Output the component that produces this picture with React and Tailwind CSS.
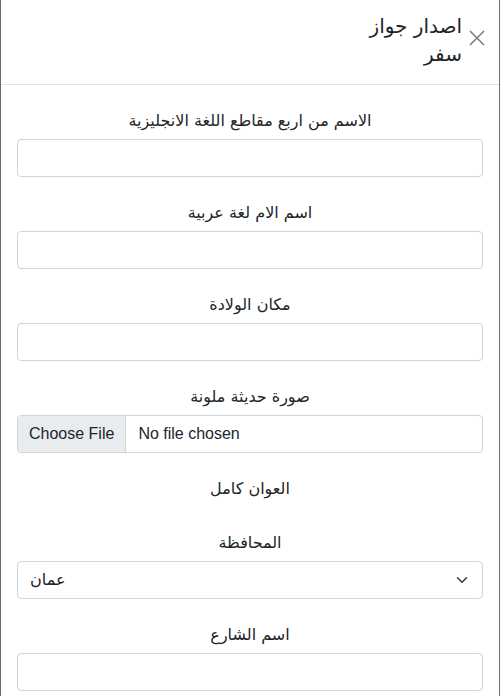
import React from 'react';

const Label = ({ children, className = 'mb-[6px]' }) => (
    <label className={`block text-center text-[16px] leading-6 text-[#212529] ${className}`}>{children}</label>
);

const TextField = ({ label }) => (
    <div className="mb-[24px]">
        <Label>{label}</Label>
        <div className="h-[38px] w-full rounded border border-[#ced4da] bg-white" />
    </div>
);

export default function App() {
    return (
        <div dir="rtl" className="min-h-[696px] w-[500px] bg-white border-x border-[#6b6b6b] text-[#212529]" style={{ fontFamily: '"Segoe UI", "DejaVu Sans", "Noto Sans", sans-serif' }}>
            <div className="flex items-start border-b border-[#dee2e6] pt-3 pb-4 pr-[14px] pl-4">
                <button className="mt-[18px] ml-[7px] p-0 text-[#7a7a7a]">
                    <svg width="16" height="16" viewBox="0 0 16 16" fill="none" stroke="currentColor" strokeWidth="1.5">
                        <path d="M1 1 L15 15 M15 1 L1 15" />
                    </svg>
                </button>
                <h5 className="w-[110px] text-[20px] font-medium leading-[28px]">
                    اصدار جواز
                    <br />
                    سفر
                </h5>
            </div>

            <div className="px-4 pt-[24px]">
                <TextField label="الاسم من اربع مقاطع اللغة الانجليزية" />
                <TextField label="اسم الام لغة عربية" />
                <TextField label="مكان الولادة" />

                <div className="mb-[24px]">
                    <Label>صورة حديثة ملونة</Label>
                    <div dir="ltr" className="flex h-[38px] overflow-hidden rounded border border-[#ced4da] text-[16px]" style={{ fontFamily: '"Liberation Sans", Arial, sans-serif' }}>
                        <div className="flex items-center bg-[#e9ecef] border-r border-[#ced4da] px-[11px] text-[#212529]">Choose File</div>
                        <div className="flex items-center px-3 text-[#212529]">No file chosen</div>
                    </div>
                </div>

                <div className="mb-[30px]">
                    <Label className="mb-0">العوان كامل</Label>
                </div>

                <div className="mb-[24px]">
                    <Label>المحافظة</Label>
                    <div dir="ltr" className="flex h-[38px] items-center justify-between rounded border border-[#ced4da] pl-3 pr-[14px] text-[16px]">
                        <span>عمان</span>
                        <svg width="12" height="12" viewBox="0 0 16 16" fill="none" stroke="#343a40" strokeWidth="2" strokeLinecap="round" strokeLinejoin="round">
                            <path d="M2 5 L8 11 L14 5" />
                        </svg>
                    </div>
                </div>

                <TextField label="اسم الشارع" />
            </div>
        </div>
    );
}
